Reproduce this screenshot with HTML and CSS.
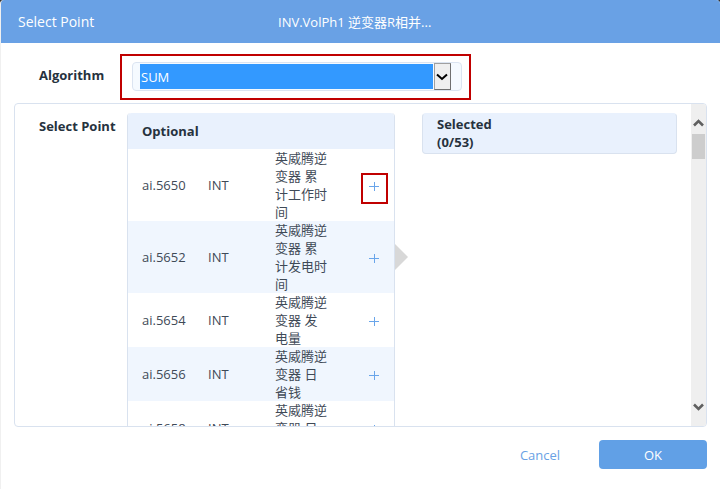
FILE: index.html
```html
<!DOCTYPE html>
<html lang="zh-CN">
<head>
<meta charset="utf-8">
<title>Select Point</title>
<link rel="stylesheet" href="styles.css">
</head>
<body>
<div class="dialog">
  <header class="dialog-header">
    <h1 class="dialog-title">Select Point</h1>
    <span class="dialog-target">INV.VolPh1 逆变器R相并...</span>
  </header>
  <main class="dialog-body">
    <div class="field">
      <label class="field-label" for="algorithm">Algorithm</label>
      <div class="field-highlight">
        <div class="select-box">
          <select class="select" id="algorithm"><option>SUM</option></select>
          <span class="select-arrow">
            <svg width="12" height="8" viewBox="0 0 12 8" aria-hidden="true"><path d="M1 1.5 L6 6 L11 1.5" fill="none" stroke="#000" stroke-width="2"/></svg>
          </span>
        </div>
      </div>
    </div>
    <section class="panel">
      <div class="panel-content">
        <h2 class="panel-label">Select Point</h2>
        <div class="list">
          <h3 class="list-header">Optional</h3>
          <table class="points">
            <colgroup><col class="col-id"><col class="col-type"><col class="col-name"><col></colgroup>
            <tbody>
              <tr><td>ai.5650</td><td>INT</td><td class="name">英威腾逆变器 累计工作时间</td><td><button class="add add-marked" type="button" aria-label="Add"><svg width="10" height="10" viewBox="0 0 10 10"><path d="M0 5.5H10M5.5 1V10"/></svg></button></td></tr>
              <tr><td>ai.5652</td><td>INT</td><td class="name">英威腾逆变器 累计发电时间</td><td><button class="add" type="button" aria-label="Add"><svg width="10" height="10" viewBox="0 0 10 10"><path d="M0 5.5H10M5.5 1V10"/></svg></button></td></tr>
              <tr><td>ai.5654</td><td>INT</td><td class="name">英威腾逆变器 发电量</td><td><button class="add" type="button" aria-label="Add"><svg width="10" height="10" viewBox="0 0 10 10"><path d="M0 5.5H10M5.5 1V10"/></svg></button></td></tr>
              <tr><td>ai.5656</td><td>INT</td><td class="name">英威腾逆变器 日省钱</td><td><button class="add" type="button" aria-label="Add"><svg width="10" height="10" viewBox="0 0 10 10"><path d="M0 5.5H10M5.5 1V10"/></svg></button></td></tr>
              <tr><td>ai.5658</td><td>INT</td><td class="name last">英威腾逆变器 日</td><td><button class="add" type="button" aria-label="Add"><svg width="10" height="10" viewBox="0 0 10 10"><path d="M0 5.5H10M5.5 1V10"/></svg></button></td></tr>
            </tbody>
          </table>
        </div>
        <div class="transfer"></div>
        <div class="selected">
          <h3 class="selected-header">Selected<br>(0/53)</h3>
        </div>
      </div>
      <div class="scrollbar">
        <svg width="11" height="8" viewBox="0 0 11 8" aria-hidden="true"><path d="M1 6.5 L5.5 2 L10 6.5" fill="none" stroke="#606060" stroke-width="2.6"/></svg>
        <div class="scrollbar-thumb"></div>
        <svg class="scrollbar-down" width="11" height="8" viewBox="0 0 11 8" aria-hidden="true"><path d="M1 1.5 L5.5 6 L10 1.5" fill="none" stroke="#606060" stroke-width="2.6"/></svg>
      </div>
    </section>
  </main>
  <footer class="dialog-footer">
    <button class="button button-cancel" type="button">Cancel</button>
    <button class="button button-ok" type="button">OK</button>
  </footer>
</div>
</body>
</html>
```
FILE: styles.css
```css
* {
  box-sizing: border-box;
}

body {
  margin: 0;
  background: #333;
  color: #3f4a57;
  font: 13px/18px "Open Sans", "Noto Sans CJK SC", sans-serif;
}

h1, h2, h3 {
  margin: 0;
  font-size: 13px;
  color: #26323e;
}

button, select {
  font: inherit;
}

.dialog {
  display: flex;
  flex-direction: column;
  height: 100vh;
  overflow: hidden;
  background: #fff;
  border-left: 1px solid #f0f0f0;
  border-radius: 4px 4px 0 0;
}

.dialog-header {
  display: grid;
  grid-template-columns: 260px 1fr;
  align-items: center;
  flex: none;
  height: 43px;
  margin-left: -1px;
  padding: 0 18px;
  background: #69a1e5;
  color: #fff;
}

.dialog-title {
  font-size: 14px;
  font-weight: 400;
  color: #fff;
}

.dialog-body {
  display: flex;
  flex: 1;
  flex-direction: column;
  gap: 3px;
  min-height: 0;
  padding: 11px 13px 0;
}

.field {
  display: flex;
  flex: none;
  align-items: center;
}

.field-label {
  width: 106px;
  padding: 0 0 4px 25px;
  font-weight: 700;
  color: #26323e;
}

.field-highlight {
  flex: 0 1 351px;
  padding: 6px 7px 7px 10px;
  border: 2px solid #c00000;
}

.select-box {
  display: flex;
  gap: 1px;
  height: 29px;
  padding: 0 10px 0 7px;
  background: #f5faff;
  border: 1px solid #dbe4f1;
  border-radius: 4px;
}

.select {
  flex: 1;
  min-width: 0;
  margin: 1px 0;
  padding: 0 1px;
  appearance: none;
  border: 0;
  border-radius: 0;
  background: #3399ff;
  color: #fff;
}

.select-arrow {
  display: flex;
  flex: none;
  align-items: center;
  justify-content: center;
  width: 17px;
  padding-right: 2px;
  background: #efefef;
  border: 1px solid #a0a0a0;
  border-right-color: #707070;
  border-bottom-color: #707070;
}

.panel {
  display: flex;
  flex: 1;
  min-height: 0;
  overflow: hidden;
  border: 1px solid #d9e2ef;
  border-radius: 4px;
}

.panel-content {
  display: flex;
  flex: 1;
  align-items: flex-start;
  padding: 9px 14px 0 24px;
}

.panel-label {
  flex: none;
  width: 88px;
  padding-top: 4px;
}

.list {
  flex: 1 1 268px;
  border: 1px solid #d9e2ef;
  border-top: 0;
  border-radius: 4px 4px 0 0;
}

.list-header {
  padding: 9px 14px;
  background: #e9f1fd;
  border-radius: 4px 4px 0 0;
}

.points {
  width: 100%;
  table-layout: fixed;
  border-collapse: collapse;
}

.points tr:nth-child(even) {
  background: #f0f6fe;
}

.points td {
  padding: 0;
}

.points td:first-child {
  padding-left: 14px;
}

.points .name {
  padding-right: 27px;
}

.points .last {
  padding-bottom: 18px;
}

.col-id {
  width: 80px;
}

.col-type {
  width: 67px;
}

.col-name {
  width: 80px;
}

.add {
  display: flex;
  align-items: center;
  justify-content: center;
  width: 27px;
  height: 31px;
  margin: 6px auto 0;
  padding: 0 2px 4px 0;
  background: none;
  border: 2px solid transparent;
}

.add-marked {
  border-color: #c00000;
}

.add path {
  fill: none;
  stroke: #69a5ea;
}

.transfer {
  flex: none;
  width: 27px;
  padding-top: 131px;
}

.transfer::before {
  content: "";
  display: block;
  width: 0;
  border: 13px solid transparent;
  border-right: 0;
  border-left-color: #d8d8d8;
}

.selected {
  flex: 1 1 255px;
}

.selected-header {
  padding: 1px 14px 2px;
  background: #e9f1fd;
  border: 1px solid #d9e2ef;
  border-top-color: #e9f1fd;
  border-radius: 4px;
}

.scrollbar {
  display: flex;
  flex: none;
  flex-direction: column;
  align-items: center;
  width: 15px;
  padding: 15px 0;
  background: #efefef;
}

.scrollbar-thumb {
  width: 13px;
  height: 25px;
  margin-top: 7px;
  background: #cdcdcd;
}

.scrollbar-down {
  margin-top: auto;
}

.dialog-footer {
  display: flex;
  flex: none;
  justify-content: flex-end;
  padding: 13px 13px 20px;
}

.button {
  width: 108px;
  height: 29px;
  padding: 0;
  border: 0;
  border-radius: 4px;
}

.button-cancel {
  width: 118px;
  background: none;
  color: #69a1e5;
}

.button-ok {
  background: #61a0e6;
  color: #fff;
}
```
